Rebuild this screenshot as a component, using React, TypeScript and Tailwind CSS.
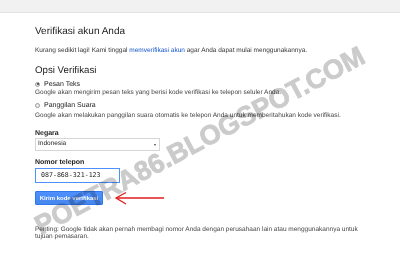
import React from "react";

function Radio({ checked }: { checked?: boolean }) {
  return (
    <span className="flex items-center justify-center w-[5px] h-[5px] rounded-full border border-[#9a9a9a] bg-[#ececec]">
      {checked && <span className="block w-[2px] h-[2px] rounded-full bg-[#333]" />}
    </span>
  );
}

export default function App() {
  return (
    <div className="relative w-[400px] h-[275px] overflow-hidden bg-white text-[#222] font-['Liberation_Sans',Arial,sans-serif] [text-rendering:geometricPrecision]">
      {/* top bar */}
      <div className="h-[13px] bg-[#f1f1f1] border-b border-[#e3e3e3]" />

      <main className="pl-[35px]">
        <h1 className="mt-[13px] text-[10px] leading-[12px] text-[#222]">Verifikasi akun Anda</h1>

        <p className="mt-[9px] text-[6.5px] leading-[8px] text-[#333]">
          Kurang sedikit lagi! Kami tinggal{" "}
          <span className="text-[#1155cc]">memverifikasi akun</span> agar Anda dapat mulai menggunakannya.
        </p>

        <h2 className="mt-[10px] text-[9.7px] leading-[12px] text-[#222]">Opsi Verifikasi</h2>

        {/* options */}
        <div className="mt-[2.5px] flex items-center gap-[4px] h-[9px]">
          <Radio checked />
          <span className="text-[7px] leading-[9px]">Pesan Teks</span>
        </div>
        <p className="text-[6.5px] leading-[8px] text-[#444]">
          Google akan mengirim pesan teks yang berisi kode verifikasi ke telepon seluler Anda.
        </p>

        <div className="mt-[4.75px] flex items-center gap-[4px] h-[9px]">
          <Radio />
          <span className="text-[7px] leading-[9px]">Panggilan Suara</span>
        </div>
        <p className="mt-[1.25px] text-[6.5px] leading-[8px] text-[#444]">
          Google akan melakukan panggilan suara otomatis ke telepon Anda untuk memberitahukan kode verifikasi.
        </p>

        {/* country */}
        <label className="block mt-[9px] text-[7px] leading-[9px] font-bold text-[#222]">Negara</label>
        <div className="flex items-center justify-between w-[125px] h-[13px] border border-[#d6d6d6] bg-white pl-[2px] pr-[3px]">
          <span className="text-[6.5px] leading-[8px] text-[#222]">Indonesia</span>
          <span className="w-0 h-0 mt-[2px] border-l-[1.5px] border-r-[1.5px] border-t-[2px] border-l-transparent border-r-transparent border-t-[#444]" />
        </div>

        {/* phone */}
        <label className="block mt-[7.5px] text-[7px] leading-[9px] font-bold text-[#222]">Nomor telepon</label>
        <div className="mt-[0.5px] flex items-center w-[85px] h-[15px] border border-[#4d90fe] bg-white pl-[5px]">
          <span className="text-[6.6px] leading-[8px] text-[#222] font-['DejaVu_Sans_Mono','Liberation_Mono',monospace]">
            087-868-321-123
          </span>
        </div>

        {/* button + annotation */}
        <div className="mt-[8.5px] flex items-center gap-[11px]">
          <button className="flex items-center justify-center w-[68px] h-[14px] rounded-[1px] border border-[#3079ed] bg-gradient-to-b from-[#4d90fe] to-[#4787ed] text-white text-[6px] leading-[8px] font-bold">
            Kirim kode verifikasi
          </button>
          <svg width="52" height="14" viewBox="0 0 52 14">
            <path d="M2 7 L50 7" stroke="#e21b1b" strokeWidth="1.3" fill="none" />
            <path d="M12 1.5 L2 7 L12 13" stroke="#e21b1b" strokeWidth="1.3" fill="none" />
          </svg>
        </div>

        <p className="mt-[21px] text-[6.5px] leading-[7px] text-[#444]">
          Penting: Google tidak akan pernah membagi nomor Anda dengan perusahaan lain atau menggunakannya untuk
          <br />
          tujuan pemasaran.
        </p>
      </main>

      {/* watermark */}
      <div className="absolute left-[200px] top-[141px] -translate-x-1/2 -translate-y-1/2 -rotate-[28deg] whitespace-nowrap text-[27px] leading-none font-bold text-[#cbcbcb] [-webkit-text-stroke:0.8px_#cbcbcb] mix-blend-multiply pointer-events-none">
        POETRA86.BLOGSPOT.COM
      </div>
    </div>
  );
}
